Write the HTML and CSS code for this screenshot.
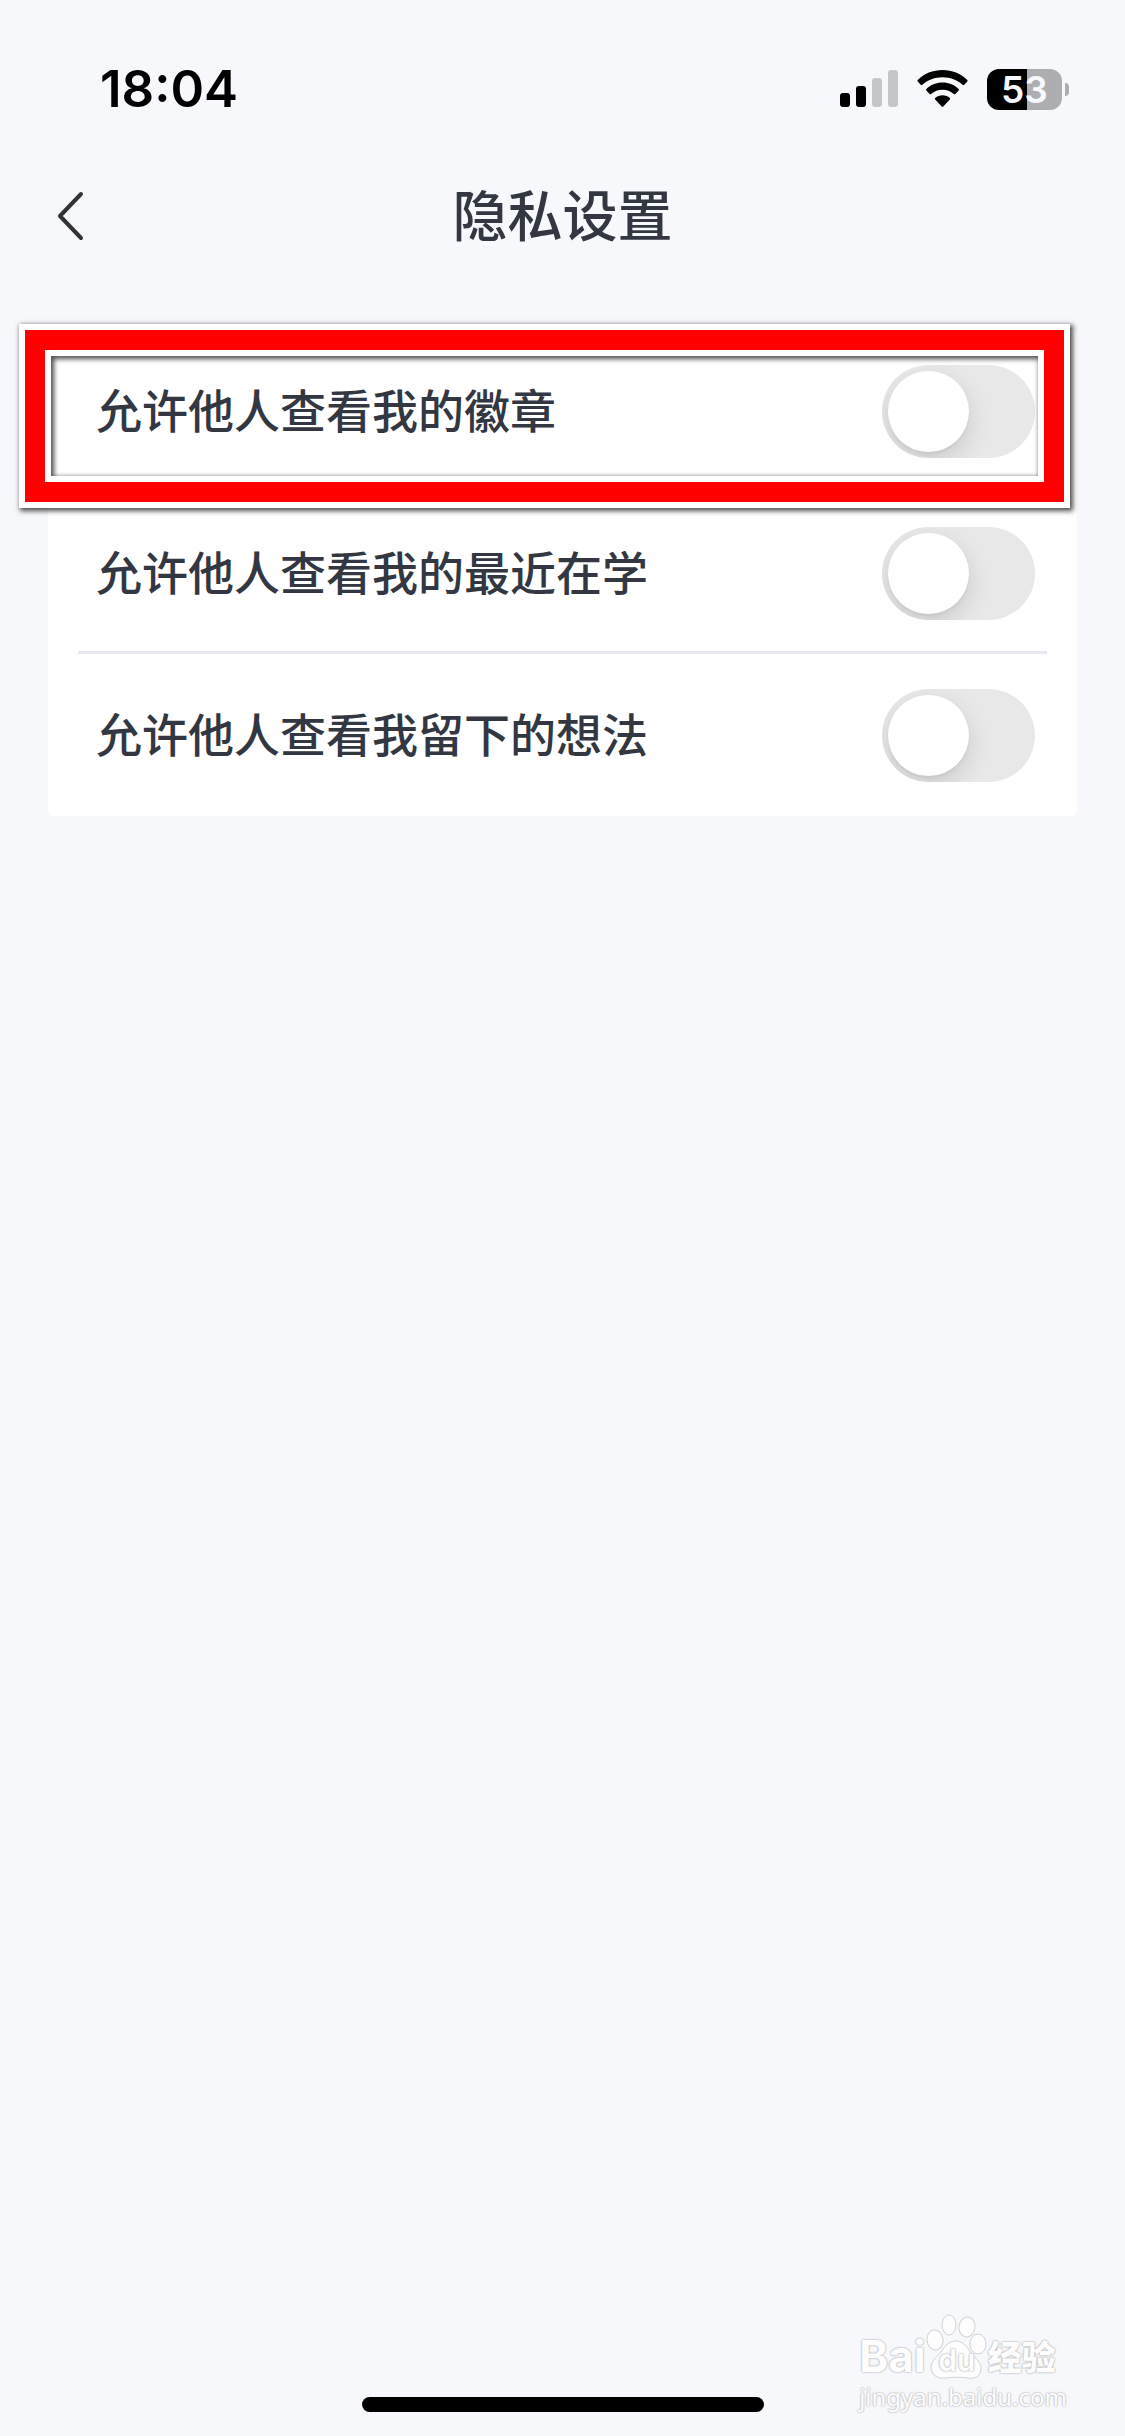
FILE: index.html
```html
<!DOCTYPE html>
<html lang="zh-CN">

<head>
  <meta charset="UTF-8">
  <meta name="viewport" content="width=device-width, initial-scale=1.0">
  <title>隐私设置</title>
  <link rel="stylesheet" href="styles.css">
</head>

<body>
  <div class="status">
    <div class="time">18:04</div>
    <div class="status_icons">
      <svg class="signal" viewBox="0 0 58 38" width="58" height="38">
        <rect x="0" y="23" width="10" height="14" rx="3" />
        <rect x="16" y="16" width="10" height="21" rx="3" />
        <rect class="dim" x="32" y="8" width="10" height="29" rx="3" />
        <rect class="dim" x="48" y="0" width="10" height="37" rx="3" />
      </svg>
      <svg class="wifi" viewBox="0 0 51 38" width="51" height="38">
        <path d="M25.500 0.000C35.000 0.000 44.000 3.700 50.300 9.900Q51 10.700 50.300 11.500L47.300 14.800Q46.500 15.600 45.600 14.800C40.200 9.900 33.200 7.200 25.500 7.200S10.800 9.900 5.400 14.800Q4.500 15.600 3.700 14.800L.7 11.500Q0 10.700 .7 9.900C7 3.700 16 0 25.500 0Z" />
        <path d="M25.500 12.500C31.800 12.500 37.500 14.900 41.600 18.900Q42.300 19.700 41.600 20.500L38.400 24Q37.600 24.700 36.800 24C33.800 21.300 29.800 19.800 25.500 19.800S17.200 21.300 14.200 24Q13.400 24.700 12.600 24L9.400 20.500Q8.700 19.700 9.400 18.900C13.500 14.900 19.200 12.500 25.500 12.500Z" />
        <path d="M25.500 25.200C28.300 25.200 30.900 26.200 32.800 27.900Q33.500 28.600 32.800 29.400L26.300 36.500Q25.500 37.300 24.700 36.500L18.200 29.400Q17.500 28.600 18.200 27.900C20.100 26.200 22.700 25.200 25.500 25.200Z" />
      </svg>
      <div class="battery">
        <div class="battery_body">53</div>
        <div class="battery_tip"></div>
      </div>
    </div>
  </div>

  <div class="nav">
    <button class="back" aria-label="返回">
      <svg viewBox="0 0 28 50" width="28" height="50">
        <path d="M24 3L3 25L24 47" />
      </svg>
    </button>
    <h1>隐私设置</h1>
  </div>

  <div class="panel">
    <div class="row marked">
      <label for="badge">允许他人查看我的徽章</label>
      <input id="badge" class="switch" type="checkbox" role="switch">
      <div class="frame">
        <div class="frame_red">
          <div class="frame_inner"></div>
        </div>
      </div>
    </div>
    <div class="row">
      <label for="recent">允许他人查看我的最近在学</label>
      <input id="recent" class="switch" type="checkbox" role="switch">
    </div>
    <div class="row">
      <label for="idea">允许他人查看我留下的想法</label>
      <input id="idea" class="switch" type="checkbox" role="switch">
    </div>
  </div>

  <div class="footer">
    <div class="home_bar"></div>
    <div class="logo">
      <div class="logo_top">
        <span class="logo_bai">Bai</span>
        <div class="paw">
          <svg viewBox="0 0 62 66" width="62" height="66">
            <ellipse cx="9" cy="26" rx="8" ry="10" transform="rotate(-8 9 26)" />
            <ellipse cx="23" cy="11" rx="7" ry="10" />
            <ellipse cx="41" cy="13" rx="8" ry="10" transform="rotate(8 41 13)" />
            <ellipse cx="52" cy="30" rx="8" ry="10" />
            <path d="M30 27C37 27 41 33 45 39C50 45 56 49 55 56C54 64 47 65 41 64C34 63 27 63 20 64C12 65 6 62 5 54C5 47 10 44 15 38C19 32 23 27 30 27Z" />
          </svg>
          <span class="logo_du">du</span>
        </div>
        <span class="logo_cn">经验</span>
      </div>
      <div class="logo_url">jingyan.baidu.com</div>
    </div>
  </div>
</body>

</html>
```
FILE: styles.css
```css
* {
  padding: 0;
  margin: 0;
  box-sizing: border-box;
}

body {
  min-height: 100vh;
  display: flex;
  flex-direction: column;
  background: #f6f8fc;
  color: #323742;
  font-family: Inter, "Noto Sans CJK SC", sans-serif;
}

.status {
  height: 156px;
  padding: 22px 56px 0 100px;
  display: flex;
  justify-content: space-between;
  align-items: center;
  color: #000;
}

.time {
  font-size: 51px;
  line-height: 60px;
  font-weight: 600;
}

.status_icons {
  display: flex;
  align-items: center;
  gap: 19px;
}

.signal .dim {
  fill: #c5c6ca;
}

.battery {
  display: flex;
  align-items: center;
  gap: 3px;
}

.battery_body {
  width: 75px;
  height: 41px;
  border-radius: 12px;
  background: linear-gradient(to right, #000 40px, #adaeb2 40px);
  color: #f6f8fc;
  font-size: 37px;
  line-height: 41px;
  font-weight: 600;
  text-align: center;
}

.battery_tip {
  width: 4px;
  height: 13px;
  border-radius: 0 4px 4px 0;
  background: #adaeb2;
}

.nav {
  height: 120px;
  padding: 0 57px;
  display: grid;
  grid-template-columns: 1fr auto 1fr;
  align-items: center;
}

.back {
  width: 28px;
  height: 50px;
  border: none;
  background: none;
}

.back svg {
  display: block;
  fill: none;
  stroke: #333;
  stroke-width: 4;
  stroke-linecap: round;
  stroke-linejoin: round;
}

h1 {
  font-size: 55px;
  line-height: 80px;
  font-weight: 500;
}

.panel {
  margin: 54px 48px 0;
  border-radius: 6px;
  background: #fff;
}

.row {
  position: relative;
  height: 162px;
  padding: 0 42px 0 48px;
  display: flex;
  justify-content: space-between;
  align-items: center;
}

.row:not(:last-child)::after {
  content: "";
  position: absolute;
  left: 30px;
  right: 30px;
  bottom: 0;
  height: 3px;
  background: #e6e7f0;
}

.row label {
  font-size: 46px;
  line-height: 68px;
  font-weight: 500;
}

.switch {
  appearance: none;
  width: 153px;
  height: 93px;
  padding: 6px;
  border-radius: 47px;
  background: #e8e8e8;
  overflow: hidden;
}

.switch::before {
  content: "";
  display: block;
  width: 81px;
  height: 81px;
  border-radius: 50%;
  background: #fff;
  box-shadow: 0 9px 24px rgba(0, 0, 0, .13), 0 3px 3px rgba(0, 0, 0, .04);
}

.switch:checked::before {
  margin-left: 60px;
}

/* highlight around the first setting */
.marked {
  z-index: 1;
}

.frame {
  position: absolute;
  z-index: 1;
  top: -6px;
  right: 7px;
  bottom: -16px;
  left: -29px;
  border: 6px solid #fff;
  box-shadow: 2px 2px 5px 1px rgba(0, 0, 0, .7);
  pointer-events: none;
}

.frame_red {
  height: 100%;
  border: 20px solid #f00;
}

.frame_inner {
  height: 100%;
  border: 6px solid #fff;
  box-shadow: inset 2px 2px 5px 1px rgba(0, 0, 0, .7);
}

.footer {
  margin-top: auto;
  display: grid;
  grid-template-columns: 1fr auto 1fr;
  align-items: end;
}

.home_bar {
  grid-column: 2;
  width: 402px;
  height: 15px;
  margin-bottom: 24px;
  border-radius: 8px;
  background: #000;
}

.logo {
  justify-self: end;
  padding: 0 58px 22px 0;
  color: #fdfdfe;
  text-shadow: 0 0 2px #bbb, 0 0 2px #bbb, 0 0 1px #ccc;
}

.logo_top {
  display: flex;
  align-items: flex-end;
}

.logo_bai {
  font-size: 44px;
  line-height: 48px;
  font-weight: 700;
}

.logo_du {
  position: absolute;
  left: 0;
  right: 0;
  bottom: 4px;
  font-size: 30px;
  line-height: 32px;
  font-weight: 600;
  text-align: center;
}

.logo_cn {
  font-size: 34px;
  line-height: 44px;
  font-weight: 900;
}

.paw {
  position: relative;
}

.paw svg {
  display: block;
  fill: #fdfdfe;
  stroke: #d0d1d4;
  stroke-width: 1;
}

.logo_url {
  font-family: "Noto Sans", sans-serif;
  font-size: 24px;
  line-height: 34px;
}
```
